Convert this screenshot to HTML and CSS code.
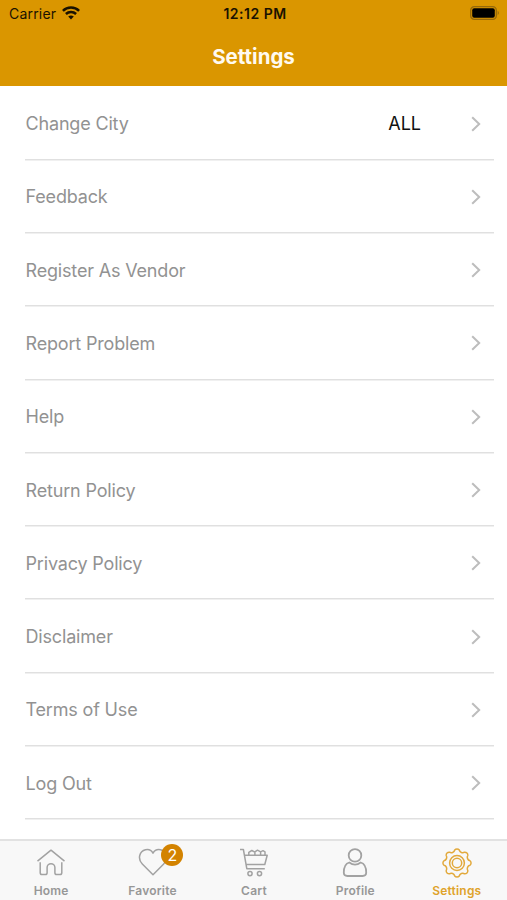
FILE: index.html
```
<!DOCTYPE html>
<html lang="en">
<head>
<meta charset="utf-8">
<title>Settings</title>
<link rel="stylesheet" href="styles.css">
</head>
<body>
<div class="app">
  <header class="header">
    <div class="status">
      <div class="carrier"><span>Carrier</span>
        <svg class="wifi" width="18" height="14" viewBox="0 0 18 14" fill="none" stroke="#1a1200" stroke-width="2.5"><path d="M.9 4.8C5.3.4 12.7.4 17.1 4.8"/><path d="M3.9 8C6.8 5.2 11.2 5.2 14.1 8"/><path d="M6.2 10.6Q9 8.2 11.8 10.6L9 13.6Z" fill="#1a1200" stroke="none"/></svg>
      </div>
      <div class="time">12:12 PM</div>
      <svg class="battery" width="30" height="14" viewBox="0 0 30 14"><rect x=".7" y=".7" width="25.6" height="12.6" rx="3.6" fill="none" stroke="#96690a" stroke-width="1.3"/><rect x="2.2" y="2.2" width="22.6" height="9.6" rx="2" fill="#000"/><path d="M27.7 4.8Q30 7 27.7 9.2Z" fill="#96690a"/></svg>
    </div>
    <h1 class="title">Settings</h1>
  </header>
  <main class="list">
    <div class="row"><span class="label">Change City</span><span class="value">ALL</span><svg class="chev" viewBox="0 0 10 16"><path d="M1.2 1.2 8.2 8l-7 6.8"/></svg></div>
    <div class="row"><span class="label">Feedback</span><svg class="chev" viewBox="0 0 10 16"><path d="M1.2 1.2 8.2 8l-7 6.8"/></svg></div>
    <div class="row"><span class="label">Register As Vendor</span><svg class="chev" viewBox="0 0 10 16"><path d="M1.2 1.2 8.2 8l-7 6.8"/></svg></div>
    <div class="row"><span class="label">Report Problem</span><svg class="chev" viewBox="0 0 10 16"><path d="M1.2 1.2 8.2 8l-7 6.8"/></svg></div>
    <div class="row"><span class="label">Help</span><svg class="chev" viewBox="0 0 10 16"><path d="M1.2 1.2 8.2 8l-7 6.8"/></svg></div>
    <div class="row"><span class="label">Return Policy</span><svg class="chev" viewBox="0 0 10 16"><path d="M1.2 1.2 8.2 8l-7 6.8"/></svg></div>
    <div class="row"><span class="label">Privacy Policy</span><svg class="chev" viewBox="0 0 10 16"><path d="M1.2 1.2 8.2 8l-7 6.8"/></svg></div>
    <div class="row"><span class="label">Disclaimer</span><svg class="chev" viewBox="0 0 10 16"><path d="M1.2 1.2 8.2 8l-7 6.8"/></svg></div>
    <div class="row"><span class="label">Terms of Use</span><svg class="chev" viewBox="0 0 10 16"><path d="M1.2 1.2 8.2 8l-7 6.8"/></svg></div>
    <div class="row"><span class="label">Log Out</span><svg class="chev" viewBox="0 0 10 16"><path d="M1.2 1.2 8.2 8l-7 6.8"/></svg></div>
  </main>
  <nav class="tabs">
    <div class="tab">
      <svg class="icon" viewBox="0 0 30 30"><path d="M1.5 13.2 15 2.2l13.5 11M4.2 14.2v10.6q0 1.8 1.8 1.8h3.4q1.7 0 1.7-1.8v-5.2a3.9 3.9 0 0 1 7.8 0v5.2q0 1.8 1.7 1.8H24q1.8 0 1.8-1.8V14.2"/></svg>
      <span>Home</span>
    </div>
    <div class="tab">
      <svg class="icon" viewBox="0 0 30 30"><path d="M15 26.8 4.3 16C-.7 10.8 1.4 3.2 7.5 1.7 10.7 1 13.5 2.4 15 5.2c1.5-2.8 4.3-4.2 7.5-3.5 6.1 1.5 8.2 9.1 3.2 14.3Z"/></svg>
      <b class="badge">2</b>
      <span>Favorite</span>
    </div>
    <div class="tab">
      <svg class="icon" viewBox="0 0 30 30"><path d="M1 1.5h3.4l3.4 19.2h18M5.3 7.2h22.9l-2.4 9.3H7M9.8 6.8V4.3l3-1.8 3.1 1.7v2.6m0-2.9 2.6-1.7 3.1 1.7v2.9m0-2.9 2.4-1.2 2 1.2v2.9"/><circle cx="11" cy="25.6" r="2.1"/><circle cx="20.5" cy="25.6" r="2.1"/></svg>
      <span>Cart</span>
    </div>
    <div class="tab">
      <svg class="icon profile" viewBox="0 0 30 30"><circle cx="15" cy="7.4" r="6.3"/><path d="M9.3 14.5C5.2 15.6 3.8 20.4 3.8 24.6q0 3.4 3.6 3.4h15.2q3.6 0 3.6-3.4c0-4.2-1.4-9-5.5-10.1Q15 18.8 9.3 14.5Z"/></svg>
      <span>Profile</span>
    </div>
    <div class="tab active">
      <svg class="icon" viewBox="0 0 30 30"><path d="M12.71 2A3 3 0 0 1 17.29 2A3.5 3.5 0 0 0 22.57 4.19A3 3 0 0 1 25.81 7.43A3.5 3.5 0 0 0 28 12.71A3 3 0 0 1 28 17.29A3.5 3.5 0 0 0 25.81 22.57A3 3 0 0 1 22.57 25.81A3.5 3.5 0 0 0 17.29 28A3 3 0 0 1 12.71 28A3.5 3.5 0 0 0 7.43 25.81A3 3 0 0 1 4.19 22.57A3.5 3.5 0 0 0 2 17.29A3 3 0 0 1 2 12.71A3.5 3.5 0 0 0 4.19 7.43A3 3 0 0 1 7.43 4.19A3.5 3.5 0 0 0 12.71 2Z"/><circle cx="15" cy="15" r="7.4"/><circle cx="15" cy="15" r="4.7"/></svg>
      <span>Settings</span>
    </div>
  </nav>
</div>
</body>
</html>
```
FILE: styles.css
```
* { box-sizing: border-box; }
body {
  margin: 0;
  background: #fff;
  font-family: Inter, "Liberation Sans", sans-serif;
}
.app {
  height: 900px;
  display: flex;
  flex-direction: column;
  overflow: hidden;
}
.header {
  flex: none;
  height: 86px;
  background: #da9600;
}
.status {
  height: 27px;
  padding: 0 7px 0 9px;
  display: grid;
  grid-template-columns: 1fr auto 1fr;
  align-items: center;
  color: #1a1200;
  font-size: 14px;
  line-height: 27px;
}
.carrier { display: flex; align-items: center; gap: 6px; letter-spacing: .2px; }
.wifi { display: block; margin-top: -2px; }
.time { font-weight: 600; letter-spacing: .5px; margin-right: -1px; }
.battery { justify-self: end; margin-top: -1px; }
.title {
  margin: 0;
  height: 58px;
  line-height: 59px;
  text-align: center;
  color: #fffaf0;
  font-size: 20.5px;
  font-weight: 700;
}
.list {
  flex: 1;
  min-height: 0;
  padding: .4px 13px 0 25px;
}
.row {
  height: 73.3px;
  padding: 2px 13px 0 .5px;
  display: flex;
  align-items: center;
  border-bottom: 1px solid #e0e0e0;
  box-shadow: 0 1px 0 #f0f0f0;
}
.label { flex: 1; color: #929292; font-size: 18px; letter-spacing: -.17px; }
.value { margin-right: 50px; color: #111; font-size: 18px; }
.chev {
  flex: none;
  width: 10px;
  height: 16px;
  fill: none;
  stroke: #bdbdbd;
  stroke-width: 2;
}
.tabs {
  flex: none;
  height: 61px;
  display: grid;
  grid-template-columns: repeat(5, 1fr);
  border-top: 2px solid #e2e2e2;
  background: #f8f8f8;
}
.tab {
  position: relative;
  display: flex;
  flex-direction: column;
  align-items: center;
  padding-top: 7px;
  padding-left: 1px;
  color: #979797;
  font-size: 12px;
  font-weight: 600;
  line-height: 16px;
  letter-spacing: .2px;
}
.icon {
  width: 30px;
  height: 30px;
  margin-bottom: 5px;
  fill: none;
  stroke: #a2a2a2;
  stroke-width: 1.5;
  stroke-linejoin: round;
}
.profile { stroke-width: 1.8; }
.active { color: #dfa32b; }
.active .icon { stroke: #e2a93c; }
.badge {
  position: absolute;
  left: 60px;
  top: 3px;
  width: 22px;
  height: 22px;
  border-radius: 50%;
  background: #d38300;
  color: #fff;
  font-size: 16px;
  font-weight: 400;
  line-height: 22px;
  text-align: center;
  letter-spacing: 0;
}
```
